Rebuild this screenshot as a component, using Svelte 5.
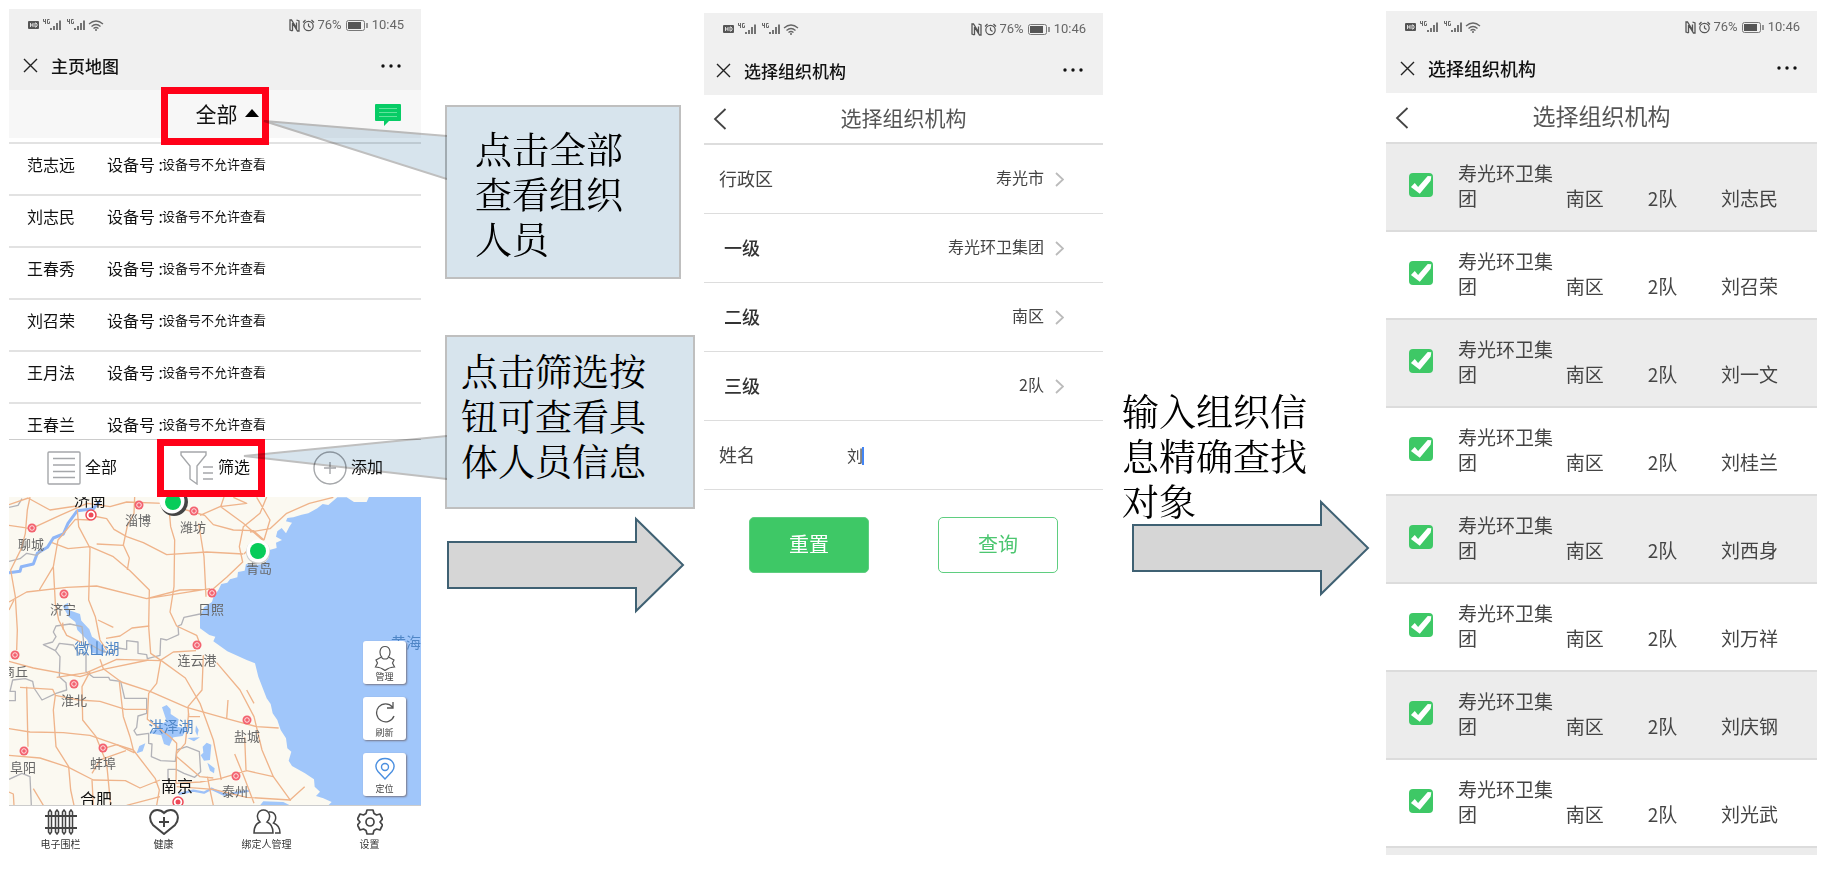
<script>
  const people = ['范志远', '刘志民', '王春秀', '刘召荣', '王月法', '王春兰'];

  const levels = [
    { id: 'district', label: '行政区', value: '寿光市' },
    { id: 'level1', label: '一级', value: '寿光环卫集团', sub: true },
    { id: 'level2', label: '二级', value: '南区', sub: true },
    { id: 'level3', label: '三级', value: '2队', sub: true },
  ];

  const results = ['刘志民', '刘召荣', '刘一文', '刘桂兰', '刘西身', '刘万祥', '刘庆钢', '刘光武'];

  const cities = [
    { name: '淄博', x: 129, y: 28, dot: [130, 8] },
    { name: '潍坊', x: 184, y: 35, dot: [185, 14] },
    { name: '聊城', x: 22, y: 52, dot: [23, 31] },
    { name: '青岛', x: 250, y: 76 },
    { name: '济宁', x: 54, y: 117, dot: [55, 97] },
    { name: '日照', x: 202, y: 117, dot: [203, 96] },
    { name: '连云港', x: 188, y: 168, dot: [188, 148] },
    { name: '商丘', x: 6, y: 179, dot: [6, 158] },
    { name: '淮北', x: 65, y: 208, dot: [65, 187] },
    { name: '盐城', x: 238, y: 244, dot: [238, 223] },
    { name: '蚌埠', x: 94, y: 271, dot: [94, 251] },
    { name: '阜阳', x: 14, y: 275, dot: [15, 254] },
    { name: '泰州', x: 226, y: 299, dot: [227, 279] },
  ];

  const capitals = [
    { name: '济南', x: 81, y: 9, dot: [82, 18] },
    { name: '南京', x: 168, y: 295, dot: [169, 305] },
    { name: '合肥', x: 87, y: 308 },
  ];

  const waters = [
    { name: '微山湖', x: 88, y: 157 },
    { name: '洪泽湖', x: 162, y: 235 },
    { name: '黄海', x: 397, y: 151 },
  ];

  let keyword = $state('刘');
</script>

{#snippet phoneTop(title, time)}
  <div class="status">
    <svg width="76" height="14" viewBox="0 0 76 14" fill="none" stroke="#666">
      <rect x="0" y="3" width="11" height="8" rx="1" fill="#555" stroke="none" />
      <path d="M2.5 5v4M5 5v4M2.5 7H5M7 5v4h1l1-1V6L8 5z" stroke="#eee" stroke-width="0.9" />
      {#each [0, 24] as dx}
        <path d="M{15.5 + dx} 1v2.5h2.5M{17.5 + dx} 1v5M{21.5 + dx} 1.5h-2v4h2v-2" />
        <path d="M{23 + dx} 12v-2M{26 + dx} 12V8M{29 + dx} 12V5M{32 + dx} 12V2.5" stroke-width="1.8" />
      {/each}
      <path d="M61 6q7-6 14 0M63.5 8.500q4.500-4 9 0M65.500 10.500q2.500-2 5 0" stroke-width="1.3" />
      <circle cx="68" cy="12" r="1" fill="#666" stroke="none" />
    </svg>
    <div class="status-right">
      <svg width="11" height="13" viewBox="0 0 11 13" fill="none" stroke="#555">
        <path d="M3.500 12L1 11V1h1.500l5 8V3.500M3.500 4v8M7.500 1L10 2v10H8.500L3.500 4" stroke-width="1.3" />
      </svg>
      <svg width="13" height="13" viewBox="0 0 13 13" fill="none" stroke="#555" stroke-width="1.2">
        <circle cx="6.5" cy="7" r="4.7" />
        <path d="M6.5 4.500V7l2 1.500M1 3.500L3.500 1M12 3.500L9.500 1" />
      </svg>
      <span>76%</span>
      <svg class="battery" width="22" height="11" viewBox="0 0 22 11" fill="none" stroke="#777">
        <rect x="0.5" y="0.5" width="18" height="10" rx="2" />
        <rect x="2" y="2" width="13" height="7" fill="#555" stroke="none" />
        <path d="M21 3v5" stroke-width="1.5" />
      </svg>
      <span>{time}</span>
    </div>
  </div>
  <div class="titlebar">
    <button type="button" class="bare" aria-label="关闭">
      <svg width="15" height="15" viewBox="0 0 15 15" fill="none" stroke="#222" stroke-width="1.4">
        <path d="M1 1l13 13M14 1L1 14" />
      </svg>
    </button>
    <strong>{title}</strong>
    <button type="button" class="bare" aria-label="更多">
      <svg width="20" height="4" viewBox="0 0 20 4" fill="#111">
        <circle cx="2" cy="2" r="1.7" /><circle cx="10" cy="2" r="1.7" /><circle cx="18" cy="2" r="1.7" />
      </svg>
    </button>
  </div>
{/snippet}

{#snippet pageHead()}
  <header class="page-head">
    <button type="button" class="bare" aria-label="返回">
      <svg width="14" height="22" viewBox="0 0 14 22" fill="none" stroke="#444" stroke-width="1.8">
        <path d="M12.5 1L2 11l10.500 10" />
      </svg>
    </button>
    <h2>选择组织机构</h2>
  </header>
{/snippet}

{#snippet arrow()}
  <svg class="arrow" viewBox="0 0 238 98">
    <path d="M1 26H189V3L236 49L189 95V72H1Z" fill="#d6d6d6" stroke="#3f6173" stroke-width="2" />
  </svg>
{/snippet}

<main class="board">
  <section class="phone home">
    {@render phoneTop('主页地图', '10:45')}
    <div class="filterbar">
      <button type="button" class="bare current marked">
        全部
        <svg width="14" height="8" viewBox="0 0 14 8"><path d="M7 0l7 8H0z" fill="#000" /></svg>
      </button>
      <button type="button" class="bare message" aria-label="消息">
        <svg width="26" height="23" viewBox="0 0 26 23">
          <path d="M1 0h24q1 0 1 1v15q0 1-1 1H14l-5 5v-5H1q-1 0-1-1V1q0-1 1-1z" fill="#07cc66" />
          <path d="M4 4.500h18M4 8.500h18M4 12.500h18" stroke="#62e39c" />
        </svg>
      </button>
    </div>
    <ul class="people">
      {#each people as name}
        <li>
          <span class="name">{name}</span>
          <span class="device">设备号 :</span>
          <small>设备号不允许查看</small>
        </li>
      {/each}
    </ul>
    <div class="toolbar">
      <button type="button" class="bare">
        <svg width="34" height="34" viewBox="0 0 34 34" fill="none" stroke="#a5a7aa" stroke-width="1.4">
          <rect x="1" y="1" width="32" height="32" rx="1" />
          <path d="M6 7.500h22M6 14h22M6 20.500h22M6 26.500h22" />
        </svg>
        <span>全部</span>
      </button>
      <button type="button" class="bare marked">
        <svg width="34" height="34" viewBox="0 0 34 34" fill="none" stroke="#a5a7aa" stroke-width="1.4">
          <path d="M1 1h25v3l-9 11v18l-7-5V15L1 4z" />
          <path d="M23 16h10M23 22h10M23 28h10" />
        </svg>
        <span>筛选</span>
      </button>
      <button type="button" class="bare">
        <svg width="34" height="34" viewBox="0 0 34 34" fill="none" stroke="#a5a7aa" stroke-width="1.4">
          <circle cx="17" cy="17" r="16" />
          <path d="M11 17h12M17 11v12" />
        </svg>
        <span>添加</span>
      </button>
    </div>
    <div class="map">
      <svg class="chart" viewBox="0 0 412 308" preserveAspectRatio="xMidYMid slice">
        <rect width="412" height="308" fill="#fbf9f1" />
        <g transform="translate(-9 -7) scale(0.33333)" fill="none" stroke-linejoin="round">
          <path
            fill="#a0c6fa"
            d="M1263 18H1108L1100 36H1062L1040 22H1012L985 45L968 42L952 55L925 70L905 74L880 82L862 84L858 94L876 98L868 110L858 130L845 114L832 124L828 140L846 150L828 158L830 174L800 182L806 204L792 222L760 225L738 222L734 242L714 246L712 262L690 268L682 278L664 282L655 300L640 322L636 336L612 352L600 380V415L628 435L646 440L640 454L682 484L740 510L765 520L775 560L800 625L812 642L818 670L832 690L842 720L858 745L862 775L874 785L866 812L876 828L915 850L942 868L944 890L960 905L948 918L970 925L995 936L985 946H1263Z"
          />
          <g fill="#a0c6fa">
            <path d="M188 348L204 338L206 360L240 372L244 392L268 418L276 440L300 456L318 486L300 494L276 488L262 450L232 420L226 396L206 380Z" />
            <path d="M486 652L500 645L512 658V672L536 688L532 710L560 715L548 738L520 742L508 768L492 762L484 736L450 730L478 706L500 694Z" />
            <path d="M588 706L596 720L592 738L586 724ZM620 758L634 764L630 810L612 812L602 796L610 788L608 770ZM622 818L644 835L642 850L630 842ZM418 768L436 760L428 784L410 790ZM562 744L600 742L582 754ZM790 934L850 936L870 946H780Z" />
          </g>
          <path stroke="#8fb6f7" stroke-width="9" d="M27 248L60 244L64 230L100 222L112 190L142 172L160 144L190 132L204 100L232 62L280 56L300 32" />
          <path stroke="#9cc0f8" stroke-width="7" d="M536 912L580 902L612 908L634 896L672 914L750 902" />
          <g stroke="#b3b3b8" stroke-width="4">
            <path d="M27 214L60 206L80 190L110 196L124 184" />
            <path d="M27 52L54 46L66 26" />
            <path d="M600 372L552 382L544 404L534 408L536 434L500 450L482 446L480 496L442 506L440 494L414 490V456L380 452V478L354 474L328 490L300 480L268 462L252 468L246 410L210 402L168 408L160 426L168 440L158 456L130 464L166 482" />
            <path d="M166 482L178 460L220 465L236 490L258 492V545L280 562H326L330 570L362 574L374 625H440V670L414 678L410 712L402 722L410 735L446 730V760L456 762L454 800L482 812L526 814L530 780L560 770L598 785L602 845L584 862L552 850L528 838H504V870" />
            <path d="M27 632H46V604H30L38 570L76 566L98 574L102 594L126 630L168 610L200 600L198 578L178 560L180 500L166 482" />
            <path d="M27 868L66 850L90 860L94 946" />
          </g>
          <g stroke="#efb48b" stroke-width="4">
            <path d="M27 44L85 24M90 21L82 60L76 130L64 176L32 240L46 320L52 420L50 480M27 106L94 116L180 76L262 40L330 50L380 36L490 40" />
            <path d="M84 24L150 60L230 48M232 60L236 110L270 174L266 330L286 380L300 450L320 480" />
            <path d="M280 78L320 86L342 118L380 140L430 158L500 194L620 186L730 192" />
            <path d="M404 21L402 70L382 108L370 165L388 204L382 240M290 162L372 166M156 158L204 176L270 170L340 200L390 242L448 300L446 410L452 490L484 512" />
            <path d="M270 90L226 88L174 150L160 230L166 340L176 390L200 436L246 458M160 230L118 300M27 336L80 306L200 292L290 288L440 326L540 300L622 298M440 326L630 296" />
            <path d="M508 66L512 110L524 150L522 290L510 366L530 408L590 436L600 462M596 100L612 200L618 320M27 360L42 330" />
            <path d="M490 40L580 66L614 76L640 104L700 120L760 122L792 150M600 76L660 50L740 40L700 22M672 21L662 50L730 100L790 152M800 21L780 70L730 110L718 170L728 216L680 262L640 296M792 150L810 90L770 22M1000 22L928 40L860 70L810 116L750 126M790 152L746 178L732 192" />
            <path d="M318 445L360 438L396 414L448 408M294 390L340 412M588 482L520 486L480 512L350 508L260 548L170 562M188 398L190 420" />
            <path d="M27 514L100 534L240 560L310 538L446 510M60 592L158 598L166 616L236 630L300 634L376 658H440M27 716L90 726L190 728L270 736L350 764L402 788" />
            <path d="M80 590L84 770M166 616L160 660L168 770L206 830L212 900L222 946M270 545L246 590L248 690L288 740L320 820L332 946M300 508L310 536L364 576L450 604L560 652L680 686L770 710L836 714" />
            <path d="M482 512L470 580L446 610L442 688L510 740L530 760L528 880M484 512L556 564L600 640L640 750L664 870M610 496L606 600L564 650L566 680L600 680M650 518L720 600L762 680L786 780L820 860L872 932M684 630L680 686" />
            <path d="M358 576L370 680L390 740L402 788L390 740M27 796L120 804L206 832L280 870L376 872L420 894L480 870M310 776L350 764L400 780L466 866L478 900L470 946M378 782L300 810L276 850" />
            <path d="M528 880L600 876L660 866L740 842L820 860M704 792L732 860L762 940M734 742L738 840M622 860L630 900L640 946M530 890L640 898L740 922L870 930L914 890M276 870L280 946M100 896L130 946M27 906L40 912L42 946M480 920L380 946M740 600L762 640M566 670L556 760L530 790M530 800L600 860L640 864" />
          </g>
        </g>
        {#each waters as water}
          <text class="water" x={water.x} y={water.y}>{water.name}</text>
        {/each}
        {#each cities as city}
          {#if city.dot}
            <circle cx={city.dot[0]} cy={city.dot[1]} r="4.5" fill="#f3626f" />
            <circle cx={city.dot[0]} cy={city.dot[1]} r="2.3" fill="#f3626f" stroke="#fff" stroke-width="0.8" />
          {/if}
          <text class="city" x={city.x} y={city.y}>{city.name}</text>
        {/each}
        {#each capitals as city}
          {#if city.dot}
            <circle cx={city.dot[0]} cy={city.dot[1]} r="5" fill="#fff" stroke="#ee4a58" stroke-width="1.5" />
            <circle cx={city.dot[0]} cy={city.dot[1]} r="2.5" fill="#ee4a58" />
          {/if}
          <text class="capital" x={city.x} y={city.y}>{city.name}</text>
        {/each}
        <circle cx="165" cy="5" r="14" fill="#444" />
        <circle cx="163" cy="4" r="12.5" fill="#fff" />
        <circle cx="164" cy="5" r="8" fill="#07cc5a" />
        <circle cx="249" cy="55" r="12" fill="#ccc" />
        <circle cx="249" cy="54" r="11.5" fill="#fff" />
        <circle cx="249" cy="54" r="8" fill="#07cc5a" />
      </svg>
      <div class="map-tools">
        <button type="button">
          <svg width="22" height="26" viewBox="0 0 22 26" fill="none" stroke="#555" stroke-width="1.2">
            <path d="M8 12.500C5 9.500 5 1.500 11 1.500S17 9.500 14 12.500M8 12.500c0 2 6 2 6 0M7.500 12L2 15l1.500 3-2 4q5 0 9.500 3.500 4.500-3.500 9.500-3.500l-2-4L20 15l-5.500-3" />
          </svg>
          管理
        </button>
        <button type="button">
          <svg width="22" height="22" viewBox="0 0 22 22" fill="none" stroke="#555" stroke-width="1.3">
            <path d="M18.5 6A9 9 0 1 0 20 15M19 1v6h-6" />
          </svg>
          刷新
        </button>
        <button type="button">
          <svg width="22" height="24" viewBox="0 0 22 24" fill="none" stroke="#4a8fe0" stroke-width="1.4">
            <path d="M11 22L4 14.500C-1 8 4 1.500 11 1.500S23 8 18 14.500z" />
            <circle cx="11" cy="10" r="3.5" />
          </svg>
          定位
        </button>
      </div>
    </div>
    <nav class="tabs">
      <a href="#fence">
        <svg width="32" height="26" viewBox="0 0 32 26" fill="none" stroke="#444" stroke-width="1.5">
          <path d="M0 7h32M0 19h32" stroke-width="1.8" />
          {#each [5, 12, 19, 26] as x}
            <path d="M{x - 1.5} 3l1.500-2 1.500 2v20l-1.500 2-1.500-2z" />
          {/each}
        </svg>
        电子围栏
      </a>
      <a href="#health">
        <svg width="30" height="26" viewBox="0 0 30 26" fill="none" stroke="#444" stroke-width="2">
          <path d="M15 4C11 0 5 0 2.500 4S1 12 4 16l11 9 11-9c3-4 4-8 1.500-12S19 0 15 4z" />
          <path d="M10 13h10M15 8v10" />
        </svg>
        健康
      </a>
      <a href="#binding">
        <svg width="28" height="26" viewBox="0 0 28 26" fill="none" stroke="#444" stroke-width="1.5">
          <path d="M7 13C2 8 5 1 10.500 1S19 8 14 13c4 1.500 6 6 6 11H1c0-5 2-9.500 6-11z" />
          <path d="M16 3c6-1 9 6 4.500 11 4 1.500 6.500 5 6.500 10h-5" />
        </svg>
        绑定人管理
      </a>
      <a href="#settings">
        <svg width="26" height="26" viewBox="0 0 26 26" fill="none" stroke="#444" stroke-width="1.7" stroke-linejoin="round">
          <path d="M10 1h6l1 3.500 2.500 1.500L23 5l2.500 5-2.500 3 2.500 3L23 21l-3.500-1-2.500 1.500L16 25h-6l-1-3.500L6.500 20 3 21 .5 16 3 13 .5 10 3 5l3.500 1L9 4.500z" />
          <circle cx="13" cy="13" r="4" />
        </svg>
        设置
      </a>
    </nav>
  </section>

  <aside class="notes">
    <div class="callout all">
      <svg class="tail" width="186" height="62" viewBox="0 0 186 62">
        <path d="M186 17L3 2L186 60" fill="#d7e4ed" stroke="#bfbfbf" stroke-width="2" />
      </svg>
      <p>点击全部<br />查看组织<br />人员</p>
    </div>
    <div class="callout pick">
      <svg class="tail" width="206" height="46" viewBox="0 0 206 46">
        <path d="M206 1L3 21L206 44" fill="#d7e4ed" stroke="#bfbfbf" stroke-width="2" />
      </svg>
      <p>点击筛选按<br />钮可查看具<br />体人员信息</p>
    </div>
    {@render arrow()}
  </aside>

  <section class="phone search">
    {@render phoneTop('选择组织机构', '10:46')}
    {@render pageHead()}
    <form onsubmit={(e) => e.preventDefault()}>
      {#each levels as level}
        <div class="field">
          <label for={level.id} class:sub={level.sub}>{level.label}</label>
          <select id={level.id}>
            <option>{level.value}</option>
          </select>
          <svg width="9" height="15" viewBox="0 0 9 15" fill="none" stroke="#bbb" stroke-width="1.8">
            <path d="M1 1l7 6.500L1 14" />
          </svg>
        </div>
      {/each}
      <div class="field">
        <label for="keyword">姓名</label>
        <span class="entry">
          <input id="keyword" type="text" bind:value={keyword} />
          <i class="caret"></i>
        </span>
      </div>
      <div class="actions">
        <button type="reset" class="reset">重置</button>
        <button type="submit" class="query">查询</button>
      </div>
    </form>
  </section>

  <aside class="step">
    <p>输入组织信<br />息精确查找<br />对象</p>
    {@render arrow()}
  </aside>

  <section class="phone results">
    {@render phoneTop('选择组织机构', '10:46')}
    {@render pageHead()}
    <table>
      <tbody>
        {#each results as name}
          <tr>
            <td class="check"><input type="checkbox" checked aria-label={name} /></td>
            <td class="org"><span>寿光环卫集团</span></td>
            <td class="area">南区</td>
            <td class="team">2队</td>
            <td>{name}</td>
          </tr>
        {/each}
      </tbody>
    </table>
    <div class="next-row"></div>
  </section>
</main>

<style>
  :global(body) {
    background: #fff;
  }

  .board {
    display: grid;
    grid-template-columns: minmax(0, 412fr) minmax(0, 283fr) minmax(0, 399fr) minmax(0, 283fr) minmax(0, 431fr);
    align-items: start;
    padding: 9px 20px 20px 9px;
    font-family: 'Noto Sans CJK SC', 'Noto Sans', sans-serif;
    color: #111;
  }

  button,
  select,
  input {
    font-family: inherit;
    color: inherit;
  }

  svg {
    display: block;
    flex: none;
  }

  .bare {
    display: flex;
    align-items: center;
    padding: 0;
    border: 0;
    background: none;
    cursor: pointer;
  }

  .status,
  .titlebar {
    display: flex;
    align-items: center;
    justify-content: space-between;
    background: #f0f0f0;
  }

  .status {
    height: 32px;
    padding: 0 17px 0 19px;
  }

  .status-right {
    display: flex;
    align-items: center;
    gap: 2px;
    font: 13px/16px Roboto, sans-serif;
    color: #666;
  }

  .battery {
    margin: 0 2px;
  }

  .titlebar {
    height: 50px;
    padding: 0 20px 0 14px;
  }

  .titlebar strong {
    flex: 1;
    margin-left: 13px;
    font-size: 17px;
    font-weight: 500;
  }

  /* home map */
  .home .titlebar {
    height: 49px;
  }

  .filterbar {
    position: relative;
    display: flex;
    justify-content: center;
    height: 48px;
    margin-bottom: 4px;
    background: #f7f7f7;
  }

  .current {
    gap: 7px;
    height: 52px;
    padding: 0 0 6px 24px;
    font-size: 21px;
  }

  .marked {
    position: relative;
  }

  .marked::after {
    content: '';
    position: absolute;
    top: 50%;
    left: 50%;
    width: 94px;
    height: 44px;
    border: 7px solid #ff0018;
    transform: translate(-50%, -50%);
  }

  .message {
    position: absolute;
    right: 20px;
    top: 14px;
  }

  .people {
    max-height: 297px;
    margin: 0;
    padding: 0;
    overflow: hidden;
    list-style: none;
  }

  .people li {
    display: flex;
    align-items: center;
    padding: 8px 18px 18px;
    border-top: 2px solid #e2e2e2;
    font-size: 16px;
    line-height: 24px;
  }

  .name {
    width: 80px;
  }

  .device {
    width: 55px;
    white-space: nowrap;
  }

  .people small {
    font-size: 13px;
  }

  .toolbar {
    display: flex;
    align-items: center;
    justify-content: space-between;
    height: 55px;
    padding: 0 38px 2px;
    border-top: 1px solid #ccc;
  }

  .toolbar button {
    gap: 4px;
    font-size: 16px;
  }

  .toolbar span {
    padding-bottom: 3px;
  }

  .toolbar .marked::after {
    left: 45%;
  }

  .map {
    position: relative;
    overflow: hidden;
  }

  .chart {
    width: 100%;
    height: auto;
  }

  .chart text {
    text-anchor: middle;
  }

  .city {
    font-size: 13px;
    fill: #666;
  }

  .capital {
    font-size: 16px;
    fill: #111;
  }

  .water {
    font-size: 15px;
    fill: #4f86c6;
  }

  .map-tools {
    position: absolute;
    right: 15px;
    bottom: 9px;
    display: grid;
    gap: 13px;
  }

  .map-tools button {
    display: flex;
    flex-direction: column;
    align-items: center;
    justify-content: space-between;
    width: 43px;
    height: 43px;
    padding: 4px 0 2px;
    border: 0;
    border-radius: 3px;
    background: #fff;
    box-shadow: 1px 1px 2px #778;
    font-size: 9px;
    line-height: 11px;
    color: #444;
  }

  .tabs {
    display: grid;
    grid-template-columns: repeat(4, 1fr);
    border-top: 1px solid #ccc;
  }

  .tabs a {
    display: flex;
    flex-direction: column;
    align-items: center;
    gap: 1px;
    padding-top: 3px;
    font-size: 10px;
    line-height: 15px;
    color: #333;
    text-decoration: none;
  }

  /* notes between the phones */
  .notes,
  .step {
    font-family: 'Liberation Serif', 'Noto Serif CJK SC', 'Noto Sans CJK SC', serif;
    font-size: 37px;
    line-height: 45px;
    color: #000;
    white-space: nowrap;
  }

  .notes p,
  .step p {
    margin: 0;
  }

  .notes {
    padding: 96px 0 0 24px;
  }

  .callout {
    position: relative;
    box-sizing: border-box;
    height: 174px;
    border: 2px solid #bfbfbf;
    background: #d7e4ed;
  }

  .callout.all {
    width: 236px;
    margin-bottom: 56px;
    padding: 22px 0 0 28px;
  }

  .callout.pick {
    width: 250px;
    margin-bottom: 7px;
    padding: 14px 0 0 14px;
  }

  .tail {
    position: absolute;
    right: 100%;
    mix-blend-mode: multiply;
  }

  .all .tail {
    top: 12px;
  }

  .pick .tail {
    top: 98px;
  }

  .arrow {
    width: 238px;
    margin-left: 2px;
  }

  .step {
    padding: 382px 0 0 19px;
  }

  .step .arrow {
    margin: -27px 0 0 10px;
  }

  /* organisation pages */
  .page-head {
    display: grid;
    grid-template-columns: 30px 1fr 30px;
    align-items: center;
    height: 49px;
    padding: 0 9px;
  }

  .page-head h2 {
    margin: 0;
    padding-bottom: 5px;
    font-size: 21px;
    font-weight: 400;
    line-height: 30px;
    text-align: center;
    color: #555;
  }

  .search {
    margin-top: 4px;
  }

  .search .titlebar {
    padding-left: 12px;
  }

  .search .page-head {
    height: 48px;
  }

  .search form {
    border-top: 2px solid #ddd;
  }

  .field {
    display: flex;
    align-items: center;
    height: 68px;
    padding: 0 39px 0 15px;
    border-bottom: 1px solid #ddd;
    color: #444;
  }

  .field label {
    padding-bottom: 2px;
    font-size: 18px;
  }

  .field label.sub {
    margin-left: 5px;
    font-weight: 500;
    color: #333;
  }

  .field select {
    flex: 1;
    margin-right: 11px;
    padding: 0 0 4px;
    border: 0;
    background: none;
    appearance: none;
    font-size: 16px;
    text-align-last: right;
  }

  .entry {
    position: relative;
    flex: 1;
    margin-left: 92px;
  }

  .entry input {
    width: 100%;
    padding: 0;
    border: 0;
    outline: 0;
    font-size: 16px;
  }

  .caret {
    position: absolute;
    top: 4px;
    left: 15px;
    width: 2px;
    height: 18px;
    background: #4285f4;
  }

  .actions {
    display: flex;
    justify-content: space-between;
    padding: 27px 45px 0;
  }

  .actions button {
    width: 120px;
    height: 56px;
    padding: 0 0 4px;
    border: 1px solid #5fce80;
    border-radius: 5px;
    font-size: 20px;
  }

  .actions .reset {
    background: #3ec866;
    color: #fff;
  }

  .actions .query {
    background: #fff;
    color: #4cc670;
  }

  .results {
    margin-top: 2px;
  }

  .results .titlebar strong {
    font-size: 18px;
  }

  .results h2 {
    font-size: 23px;
  }

  table {
    width: 100%;
    border-collapse: collapse;
    table-layout: fixed;
    font-size: 19px;
    line-height: 25px;
    color: #444;
  }

  tr {
    border-top: 2px solid #dcdcdc;
  }

  tr:nth-child(odd) {
    background: #ececec;
  }

  td {
    padding: 16px 0 20px;
    vertical-align: bottom;
  }

  .check {
    width: 72px;
    padding-left: 23px;
    box-sizing: border-box;
    vertical-align: middle;
  }

  .org {
    width: 25%;
  }

  .org span {
    display: block;
    max-width: 96px;
  }

  .area {
    width: 19%;
  }

  .team {
    width: 17%;
  }

  .check input {
    display: block;
    width: 24px;
    height: 24px;
    margin: 0;
    border-radius: 4px;
    background: #3ec866;
    appearance: none;
  }

  .check input:checked::before {
    content: '';
    display: block;
    width: 24px;
    height: 24px;
    background: #fff;
    clip-path: polygon(8% 58%, 24% 42%, 38% 58%, 78% 12%, 93% 14%, 90% 32%, 45% 86%);
  }

  .next-row {
    height: 7px;
    border-top: 2px solid #dcdcdc;
    background: #ececec;
  }
</style>
